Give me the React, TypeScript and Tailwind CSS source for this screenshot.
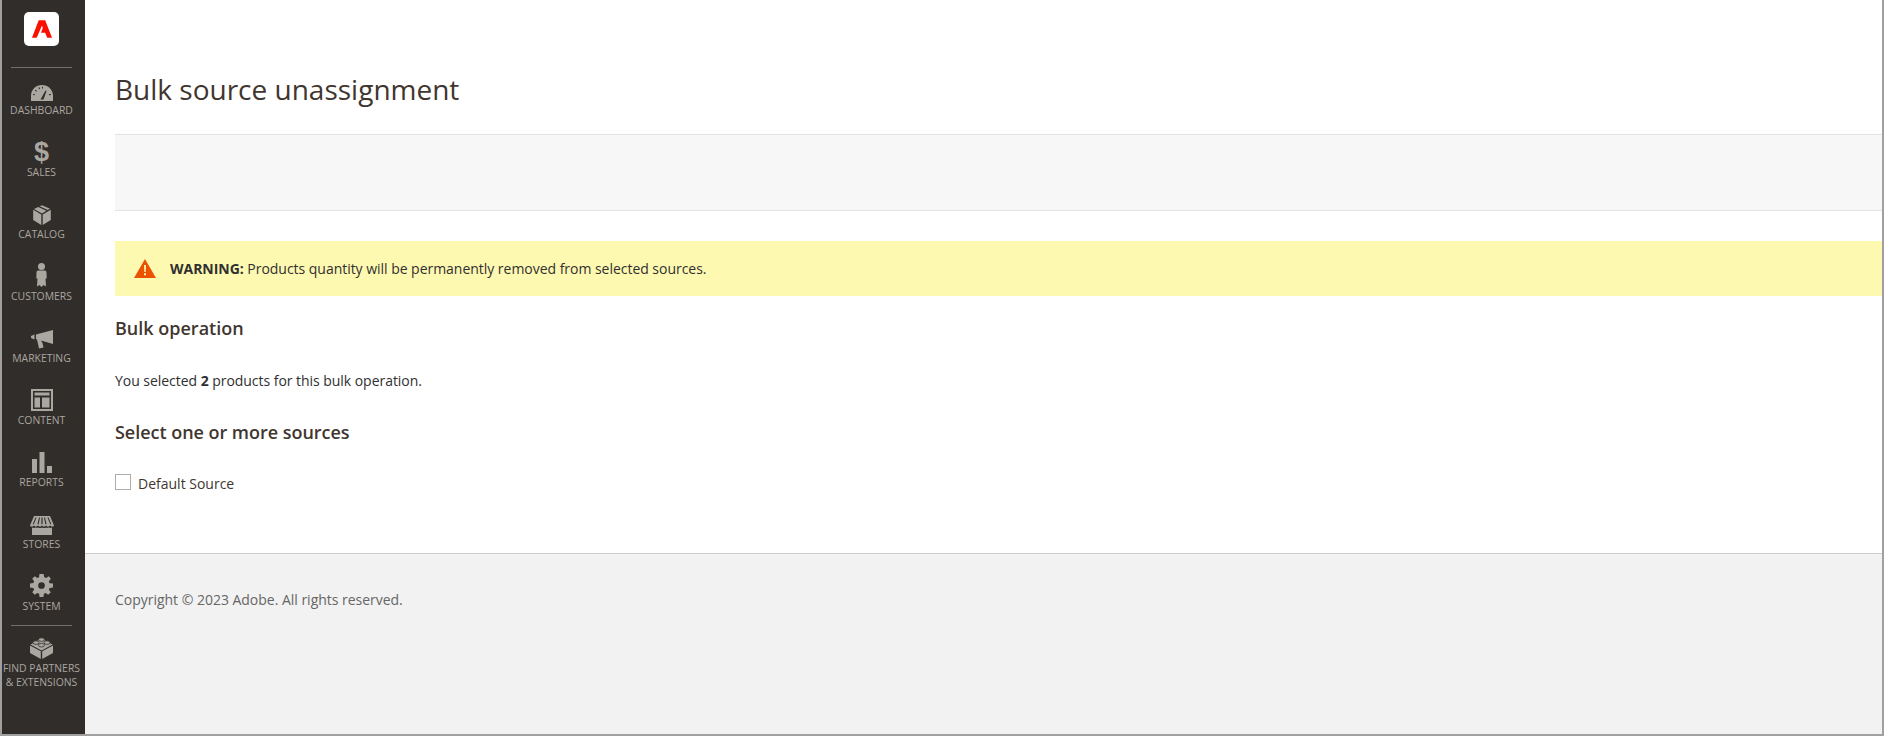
const Gauge = () => (
  <svg width="22" height="16" viewBox="0 0 22 16" fill="#aaa6a0">
    <path fillRule="evenodd" d="M11 0C5 0 0 4.700 0 10.600V16H22V10.600C22 4.700 17 0 11 0ZM9.500 14.500 14.500 5.500 15.500 6 12.500 14.500Z" />
    <path d="M7.500 2.500 8.500 2.200 9 4 8 4.300ZM3.800 5.500 4.500 4.800 6 6 5.300 6.800ZM2 10 2.200 9 4 9.300 3.800 10.300ZM11 1.800H12V3.600H11ZM18 9 19.800 9 20 10 18.200 10.300Z" fill="#312d2a" />
  </svg>
)

const Dollar = () => (
  <span className="block h-[22px] text-[27px] leading-[22px] font-bold text-[#aaa6a0] font-['Liberation_Sans',sans-serif]">$</span>
)

const Box = () => (
  <svg width="18" height="20" viewBox="0 0 18 20" fill="#aaa6a0">
    <path d="M0.200 4.800 8.300 9.500V20L0.200 15ZM17.800 4.800 9.700 9.500V20L17.800 15Z" />
    <path d="M9 0.200 17 3.800 14.800 5 6.600 1.300ZM5.200 1.900 13.400 5.700 9 8.400 1 3.900Z" />
  </svg>
)

const Person = () => (
  <svg width="11" height="24" viewBox="0 0 11 24" fill="#aaa6a0">
    <circle cx="5.500" cy="3.500" r="3.500" />
    <path d="M2.500 7.500H8.500C9.800 7.500 10.500 8.300 10.500 9.500L10.700 15.500H9.500L10 23.500 7.500 22 5.500 24 3.500 22 1 23.500 1.500 15.500H0.300L0.500 9.500C0.500 8.300 1.200 7.500 2.500 7.500Z" />
  </svg>
)

const Megaphone = () => (
  <svg width="22" height="19" viewBox="0 0 22 19" fill="#aaa6a0">
    <path d="M22 0V14L10 10.500 11.500 13 12.500 17.500 8 18.500 6 9.500 5 9V4.500ZM3.500 4.500V9.500L0 8V6Z" />
  </svg>
)

const Layout = () => (
  <svg width="22" height="22" viewBox="0 0 22 22" fill="#aaa6a0">
    <path fillRule="evenodd" d="M0 0H22V22H0ZM2 2V20H20V2Z" />
    <path d="M3.500 3.500H18.500V6.500H3.500ZM3.500 8.500H9V18.500H3.500ZM11 8.500H18.500V18.500H11Z" />
  </svg>
)

const Bars = () => (
  <svg width="20" height="21" viewBox="0 0 20 21" fill="#aaa6a0">
    <path d="M0 7H5V21H0ZM7.500 0H12.500V21H7.500ZM15 14H20V21H15Z" />
  </svg>
)

const Store = () => (
  <svg width="24" height="19" viewBox="0 0 24 19" fill="#aaa6a0">
    <path fillRule="evenodd" d="M4 0H20L24 9.500C23.500 11 21 11 20 9.500 19 11 17 11 16 9.500 15 11 13 11 12 9.500 11 11 9 11 8 9.500 7 11 5 11 4 9.500 3 11 0.500 11 0 9.500ZM5.500 1.500 2.700 8.300H3.800L6.500 1.500ZM9 1.500 7.500 8.300H8.700L10 1.500ZM14 1.500 15.300 8.300H16.500L15 1.500ZM17.500 1.500 20.200 8.300H21.300L18.500 1.500ZM11.400 1.500V8.300H12.600V1.500Z" />
    <path d="M2 11.500C3 12 4.500 12 5.500 11.500 6.500 12 7 12 8 11.500 9.500 12.200 10.500 12.200 12 11.500 13.500 12.200 14.500 12.200 16 11.500 17 12 17.500 12 18.500 11.500 19.500 12 21 12 22 11.500V19H2Z" />
  </svg>
)

const Gear = () => (
  <svg width="23" height="23" viewBox="0 0 24 24" fill="#aaa6a0">
    <path fillRule="evenodd" d="M9.800 0H14.200L14.900 3.400 16.800 4.200 19.700 2.300 21.700 5 19.600 7.700 20.500 9.600 24 10V14L20.500 14.500 19.700 16.400 21.700 19 19 21.700 16.400 19.700 14.500 20.500 14 24H10L9.500 20.500 7.600 19.700 5 21.700 2.300 19 4.300 16.400 3.500 14.500 0 14V10L3.500 9.500 4.300 7.600 2.300 5 5 2.300 7.600 4.300 9.500 3.500ZM12 8.500A3.500 3.500 0 1 0 12 15.500 3.500 3.500 0 1 0 12 8.500Z" />
  </svg>
)

const Lego = () => (
  <svg width="23" height="22" viewBox="0 0 23 22" fill="#aaa6a0">
    <path d="M11.500 1.500 22.500 7.500 11.500 13.500 0.500 7.500Z" />
    <path d="M0 8.500 10.800 14.300V22L0 16ZM23 8.500 12.200 14.300V22L23 16Z" />
    <g fill="#aaa6a0" stroke="#312d2a" strokeWidth="0.800">
      <ellipse cx="11.500" cy="2.600" rx="3" ry="1.800" />
      <ellipse cx="6" cy="5.600" rx="3" ry="1.800" />
      <ellipse cx="17" cy="5.600" rx="3" ry="1.800" />
      <ellipse cx="11.500" cy="8.200" rx="3" ry="1.800" />
    </g>
  </svg>
)

const items = [
  { label: "DASHBOARD", icon: <Gauge /> },
  { label: "SALES", icon: <Dollar /> },
  { label: "CATALOG", icon: <Box /> },
  { label: "CUSTOMERS", icon: <Person /> },
  { label: "MARKETING", icon: <Megaphone /> },
  { label: "CONTENT", icon: <Layout /> },
  { label: "REPORTS", icon: <Bars /> },
  { label: "STORES", icon: <Store /> },
  { label: "SYSTEM", icon: <Gear /> },
]

function NavItem({ label, icon }: { label: string; icon: React.ReactNode }) {
  return (
    <div className="flex h-[62px] flex-col items-center">
      <div className="flex h-[26px] items-end justify-center">{icon}</div>
      <span className="mt-[2px] text-[10.4px] leading-[14px] text-[#aaa6a0]">{label}</span>
    </div>
  )
}

export default function App() {
  return (
    <div className="flex h-[736px] w-[1884px] overflow-hidden bg-[#a0a0a0] pr-[2px] pb-[2px] pl-[2px] font-['Open_Sans',sans-serif]">
      <aside className="flex w-[83px] shrink-0 flex-col items-stretch bg-[#312d2a] pr-[4px]">
        <div className="flex justify-center pt-[12px] pb-[21px]">
          <div className="flex h-[34px] w-[35px] items-center justify-center rounded-[5px] bg-white">
            <svg width="20" height="18" viewBox="0 0 20 17.500" fill="#fa0f00">
              <path d="M6.700 0H13.200L20 17.500H15.200L13.200 12.500H9L10.800 7.800 10 5.200 4.700 17.500H0Z" />
            </svg>
          </div>
        </div>
        <div className="mx-[9px] h-px bg-[#736e69]" />
        <nav className="mt-[7px] flex flex-col">
          {items.map((item) => (
            <NavItem key={item.label} label={item.label} icon={item.icon} />
          ))}
        </nav>
        <div className="mx-[9px] mt-[-8px] h-px bg-[#736e69]" />
        <div className="mt-[11px] flex flex-col items-center">
          <Lego />
          <span className="mt-[2px] text-center text-[10.4px] leading-[14px] whitespace-nowrap text-[#aaa6a0]">
            FIND PARTNERS
            <br />& EXTENSIONS
          </span>
        </div>
      </aside>
      <div className="flex min-w-0 flex-1 flex-col bg-white">
        <main className="h-[553px] pl-[30px] text-[#303030]">
          <h1 className="pt-[70px] text-[28px] leading-[38px] font-normal text-[#41362f]">Bulk source unassignment</h1>
          <div className="mt-[26px] h-[77px] border-y border-[#e3e3e3] bg-[#f7f7f7]" />
          <div className="mt-[30px] flex h-[55px] items-center bg-[#fef9b0] pl-[19px]">
            <svg width="22" height="19" viewBox="0 0 22 19">
              <path d="M11 0 22 19H0Z" fill="#eb5202" />
              <path d="M10 6H12L11.700 13H10.300ZM10 14.200H12V16.200H10Z" fill="#fef9b0" />
            </svg>
            <p className="ml-[14px] text-[14px] leading-[20px] tracking-[-0.03px]">
              <b className="font-bold">WARNING:</b> Products quantity will be permanently removed from selected sources.
            </p>
          </div>
          <h2 className="mt-[20px] text-[18px] leading-[25px] font-semibold text-[#41362f]">Bulk operation</h2>
          <p className="mt-[30px] text-[14px] leading-[20px] tracking-[-0.04px]">
            You selected <b className="font-bold">2</b> products for this bulk operation.
          </p>
          <h2 className="mt-[29px] text-[18px] leading-[25px] font-semibold tracking-[-0.03px] text-[#41362f]">Select one or more sources</h2>
          <label className="mt-[25px] flex items-center">
            <span className="h-[16px] w-[16px] border border-[#adadad] bg-white" />
            <span className="mt-[4px] ml-[7px] text-[14px] leading-[20px] text-[#41362f]">Default Source</span>
          </label>
        </main>
        <footer className="flex-1 border-t border-[#cccccc] bg-[#f2f2f2] pt-[36px] pl-[30px] text-[14px] leading-[20px] tracking-[-0.02px] text-[#666666]">
          Copyright © 2023 Adobe. All rights reserved.
        </footer>
      </div>
    </div>
  )
}
